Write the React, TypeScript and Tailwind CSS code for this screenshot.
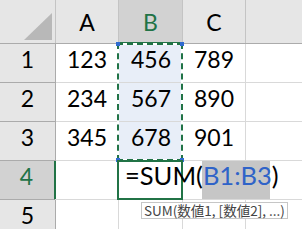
import React from "react";

// シート上のデータ（A〜C 列、1〜3 行）
const rows: { num: number; a: string; b: string; c: string }[] = [
  { num: 1, a: "123", b: "456", c: "789" },
  { num: 2, a: "234", b: "567", c: "890" },
  { num: 3, a: "345", b: "678", c: "901" },
];

const cell = "h-[39px] border-r border-b border-[#d9d9d9] text-right pr-[11px] leading-[31px]";

export default function App() {
  return (
    <div
      className="relative w-[302px] h-[229px] overflow-hidden bg-white text-[23px] text-black"
      style={{ fontFamily: "Lato, 'Noto Sans CJK JP', sans-serif" }}
    >
      {/* 列見出し */}
      <div className="flex h-[44px] bg-[#e6e6e6] border-b border-[#ababab]">
        <div className="relative w-[56px] shrink-0 border-r border-[#c4c4c4]">
          <svg className="absolute left-[24px] top-[13px]" width="29" height="28" viewBox="0 0 29 28">
            <polygon points="28,0 28,27 0,27" fill="#b8b8b8" />
          </svg>
        </div>
        <div className="w-[63px] shrink-0 border-r border-[#c4c4c4] text-center leading-[31px] pt-[7px]">A</div>
        <div className="w-[64px] shrink-0 border-r border-[#c4c4c4] bg-[#d2d2d2] text-[#217346] text-center leading-[31px] pt-[7px] border-b-2 border-b-[#217346] -mb-px">
          B
        </div>
        <div className="w-[63px] shrink-0 border-r border-[#c4c4c4] text-center leading-[31px] pt-[7px]">C</div>
        <div className="flex-1" />
      </div>

      {/* 1〜3 行 */}
      {rows.map((r) => (
        <div key={r.num} className="flex">
          <div className="w-[56px] h-[39px] shrink-0 bg-[#e6e6e6] border-r border-b border-[#ababab] text-center leading-[31px]">
            {r.num}
          </div>
          <div className={`w-[63px] shrink-0 ${cell}`}>{r.a}</div>
          <div className={`w-[64px] shrink-0 bg-[#e8eef8] ${cell}`}>{r.b}</div>
          <div className={`w-[63px] shrink-0 ${cell}`}>{r.c}</div>
          <div className="flex-1 h-[39px] border-b border-[#d9d9d9]" />
        </div>
      ))}

      {/* 4 行目（編集中） */}
      <div className="flex">
        <div className="w-[56px] h-[39px] shrink-0 bg-[#d2d2d2] border-r-2 border-[#217346] border-b border-b-[#ababab] text-[#217346] text-center leading-[31px] pr-px">
          4
        </div>
        <div className="w-[63px] h-[39px] shrink-0 border-r border-b border-[#d9d9d9] -ml-px" />
        <div className="w-[64px] h-[39px] shrink-0 border-r border-b border-[#d9d9d9]" />
        <div className="w-[63px] h-[39px] shrink-0 border-b border-[#d9d9d9]" />
        <div className="flex-1 h-[39px] border-b border-[#d9d9d9]" />
      </div>

      {/* 5 行目 */}
      <div className="flex">
        <div className="w-[56px] h-[39px] shrink-0 bg-[#e6e6e6] border-r border-[#ababab] text-center leading-[31px]">5</div>
        <div className="w-[63px] h-[39px] shrink-0 border-r border-[#d9d9d9]" />
        <div className="w-[64px] h-[39px] shrink-0 border-r border-[#d9d9d9]" />
        <div className="w-[63px] h-[39px] shrink-0 border-r border-[#d9d9d9]" />
        <div className="flex-1" />
      </div>

      {/* B1:B3 の参照範囲（点線） */}
      <div className="absolute left-[117px] top-[43px] w-[66px] h-[118px] border-2 border-white" />
      <div className="absolute left-[117px] top-[43px] w-[66px] h-[118px] border-2 border-dashed border-[#217346]" />
      <div className="absolute left-[116px] top-[42px] w-[4px] h-[4px] bg-[#2f6bd0]" />
      <div className="absolute left-[180px] top-[42px] w-[4px] h-[4px] bg-[#2f6bd0]" />
      <div className="absolute left-[116px] top-[158px] w-[4px] h-[4px] bg-[#2f6bd0]" />
      <div className="absolute left-[180px] top-[158px] w-[4px] h-[4px] bg-[#2f6bd0]" />

      {/* アクティブセル B4 */}
      <div className="absolute left-[117px] top-[160px] w-[66px] h-[40px] border-2 border-[#217346]" />

      {/* 数式の入力 */}
      <div className="absolute left-[202px] top-[161px] w-[68px] h-[38px] bg-[#c6c6c6]" />
      <div className="absolute left-[125px] top-[162px] text-[25.5px] leading-[26px] whitespace-nowrap">
        =SUM(<span className="text-[#2f63c8]">B1:B3</span>)
      </div>

      {/* 引数のヒント */}
      <div
        className="absolute left-[141px] top-[202px] h-[17px] px-[2px] bg-white border border-[#c6c6c6] text-[13.5px] leading-[15px] text-[#444] whitespace-nowrap"
        style={{ fontFamily: "'Noto Sans CJK JP', sans-serif" }}
      >
        SUM(数値1, [数値2], ...)
      </div>
    </div>
  );
}
